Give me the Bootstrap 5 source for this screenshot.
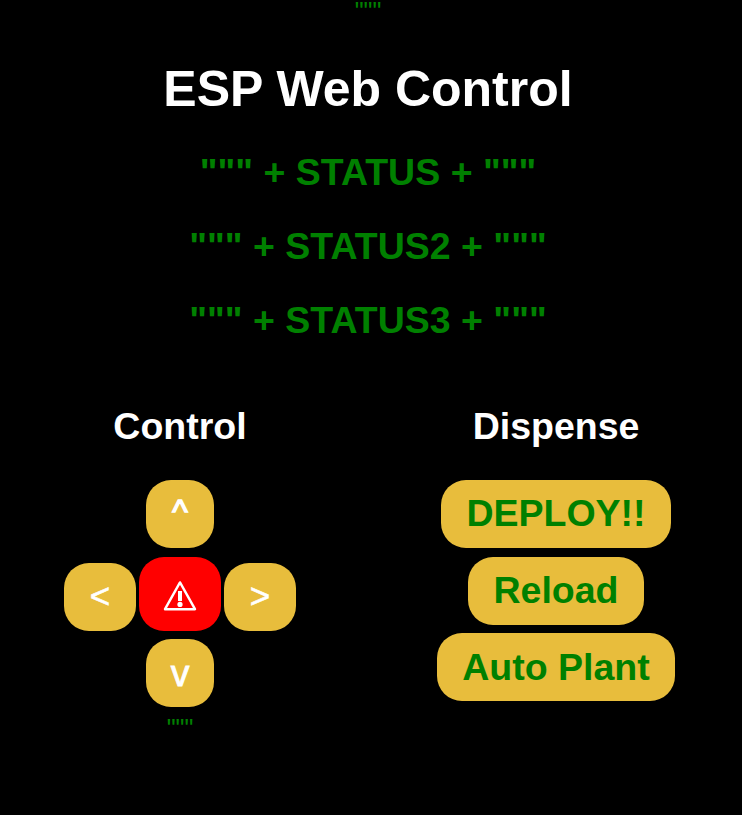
<!DOCTYPE html>
<html lang="en">
<head>
<meta charset="utf-8">
<title>ESP Web Control</title>
<link href="https://cdn.jsdelivr.net/npm/bootstrap@5.3.0/dist/css/bootstrap.min.css" rel="stylesheet">
<style>
body{background:#000;color:#008000;font-family:"Liberation Sans",Arial,sans-serif;height:815px;overflow:hidden}
.page{width:736px}
.quotes{font-size:25px;line-height:22px}
h1,h2{font-weight:700;margin:0}
h1{font-size:50px;line-height:58px;color:#fff;margin-top:38px}
h2{font-size:37.5px;line-height:44px}
.statuses{margin-top:32px;gap:30px}
.panels{margin-top:62px}
.panel-box{width:360px}
.keys{margin-top:32px}
.key{--bs-btn-border-width:0;--bs-btn-padding-x:0;--bs-btn-padding-y:0;background:#e8bd3c;border-radius:25px;height:68px;font-size:37.5px;line-height:44px;color:#fff}
.key:hover{background:#d9ae2f}
.word{font-weight:700;color:#008000}
.word:hover{color:#008000}
.up,.down{width:68px}
.up{font-size:33px;padding-bottom:4px;-webkit-text-stroke:1.4px #fff}
.down{-webkit-text-stroke:.8px #fff}
.side{width:72px;font-size:35px;padding-bottom:3px;-webkit-text-stroke:.6px #fff}
.middle{gap:3px;margin:9px 0 8px}
.stop{width:82px;height:74px;background:#f00}
.stop:hover{background:#e00000}
.actions{gap:8px}
.deploy{width:230px;margin-bottom:1px;padding-bottom:2px}
.reload{width:176px;padding-bottom:2px}
.plant{width:238px}
.left-end{margin-top:10px}
</style>
</head>
<body>
<main class="page d-flex flex-column text-center">
<div class="quotes">"""</div>
<h1>ESP Web Control</h1>
<div class="statuses d-flex flex-column">
<h2>""" + STATUS + """</h2>
<h2>""" + STATUS2 + """</h2>
<h2>""" + STATUS3 + """</h2>
</div>
<div class="panels d-flex align-items-start justify-content-between">
<section class="panel-box d-flex flex-column align-items-center">
<h2 class="text-white">Control</h2>
<div class="keys d-flex flex-column align-items-center">
<button class="btn key up">^</button>
<div class="middle d-flex align-items-end">
<button class="btn key side">&lt;</button>
<button class="btn key stop d-flex align-items-center justify-content-center" aria-label="Stop">
<svg width="34" height="74" viewBox="0 0 34 74" fill="none"><path d="M17 25.4 32 52.2H2Z" stroke="#fff" stroke-width="2.4" stroke-linejoin="round"/><path d="M15 34h4v10h-4z" fill="#fff"/><circle cx="17" cy="47.4" r="2.6" fill="#fff"/></svg>
</button>
<button class="btn key side">&gt;</button>
</div>
<button class="btn key down">v</button>
</div>
<div class="quotes left-end">"""</div>
</section>
<section class="panel-box d-flex flex-column align-items-center">
<h2 class="text-white">Dispense</h2>
<div class="keys actions d-flex flex-column align-items-center">
<button class="btn key word deploy">DEPLOY!!</button>
<button class="btn key word reload">Reload</button>
<button class="btn key word plant">Auto Plant</button>
</div>
</section>
</div>
</main>
<script src="https://cdn.jsdelivr.net/npm/bootstrap@5.3.0/dist/js/bootstrap.bundle.min.js"></script>
</body>
</html>
